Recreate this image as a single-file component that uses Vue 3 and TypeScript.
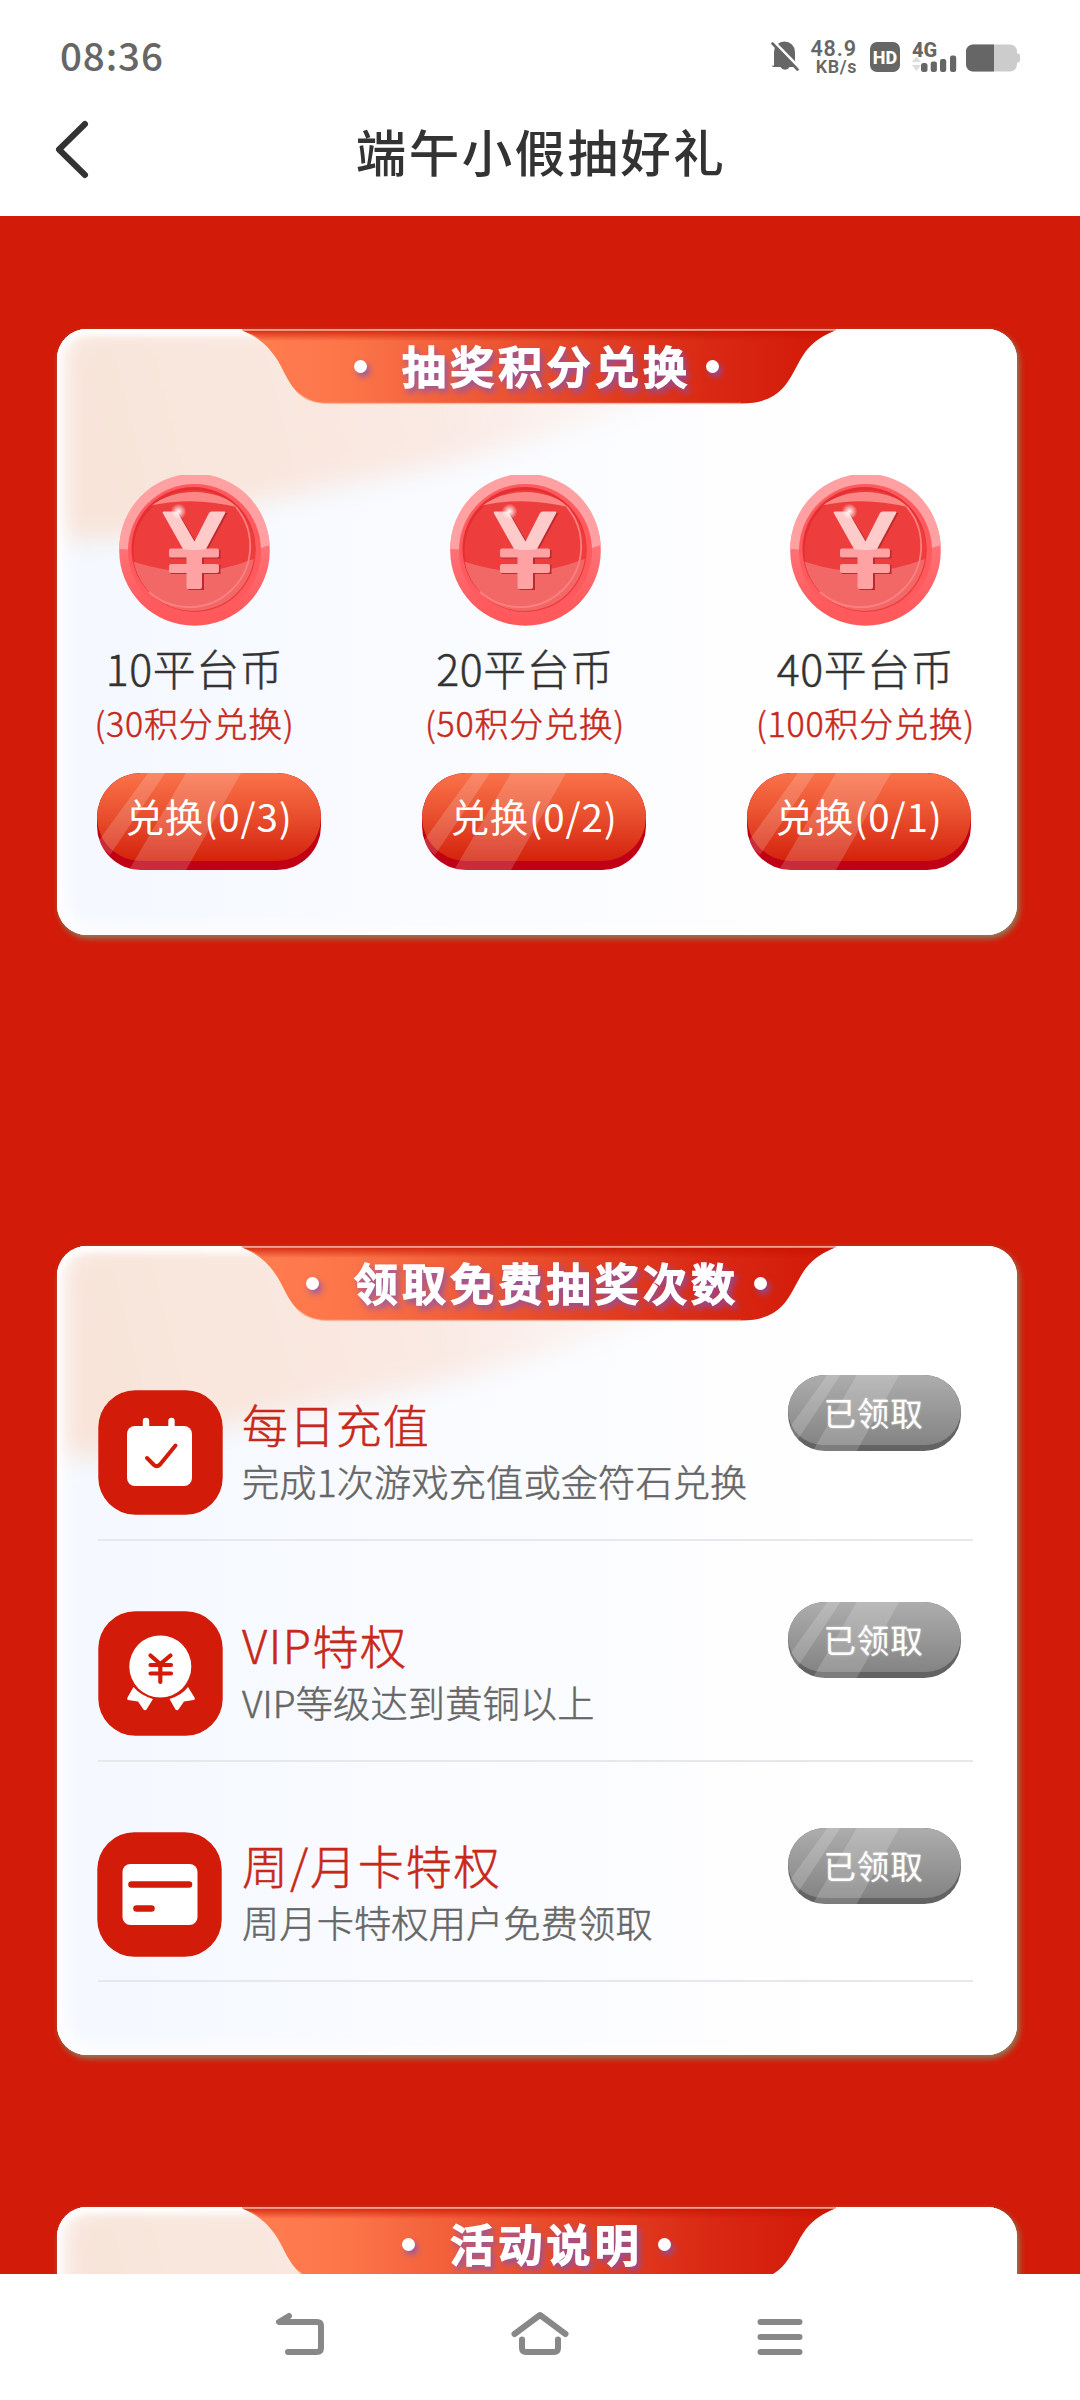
<script setup lang="ts">
interface Exchange {
  coins: number
  points: number
  used: string
}

interface Task {
  icon: 'calendar' | 'medal' | 'card'
  title: string
  note: string
}

const exchanges: Exchange[] = [
  { coins: 10, points: 30, used: '0/3' },
  { coins: 20, points: 50, used: '0/2' },
  { coins: 40, points: 100, used: '0/1' },
]

const tasks: Task[] = [
  { icon: 'calendar', title: '每日充值', note: '完成1次游戏充值或金符石兑换' },
  { icon: 'medal', title: 'VIP特权', note: 'VIP等级达到黄铜以上' },
  { icon: 'card', title: '周/月卡特权', note: '周月卡特权用户免费领取' },
]

const panels = [
  { key: 'exchange', title: '抽奖积分兑换' },
  { key: 'tasks', title: '领取免费抽奖次数' },
  { key: 'rules', title: '活动说明' },
]
</script>

<template>
  <div class="screen">
    <svg class="defs" width="0" height="0" aria-hidden="true">
      <defs>
        <linearGradient id="paper" x1="0" y1="0" x2="1" y2="0">
          <stop offset="0" stop-color="#f4f8ff" />
          <stop offset="0.55" stop-color="#fbfcff" />
          <stop offset="0.85" stop-color="#ffffff" />
        </linearGradient>
        <linearGradient id="peach" gradientUnits="userSpaceOnUse" x1="60" y1="200" x2="620" y2="60">
          <stop offset="0" stop-color="#f8e4d9" />
          <stop offset="0.6" stop-color="#faeae4" />
          <stop offset="1" stop-color="#fdf3ef" stop-opacity="0.5" />
        </linearGradient>
        <linearGradient id="ribbon" gradientUnits="userSpaceOnUse" x1="200" y1="30" x2="770" y2="30">
          <stop offset="0" stop-color="#ff7d50" />
          <stop offset="0.16" stop-color="#fc7549" />
          <stop offset="0.55" stop-color="#e64526" />
          <stop offset="0.8" stop-color="#d92813" />
          <stop offset="1" stop-color="#d21a08" />
        </linearGradient>
        <linearGradient id="ribbonShade" gradientUnits="userSpaceOnUse" x1="0" y1="2" x2="0" y2="12">
          <stop offset="0" stop-color="#c81200" stop-opacity="0.7" />
          <stop offset="1" stop-color="#c81200" stop-opacity="0" />
        </linearGradient>
        <filter id="soft" x="-20%" y="-20%" width="140%" height="140%">
          <feGaussianBlur stdDeviation="13" />
        </filter>
        <linearGradient id="rimLow" x1="0" y1="0" x2="0" y2="1">
          <stop offset="0.45" stop-color="#ff7377" />
          <stop offset="0.9" stop-color="#ff595c" />
        </linearGradient>
        <radialGradient id="spark">
          <stop offset="0" stop-color="#fff" />
          <stop offset="0.3" stop-color="#fff" stop-opacity="0.7" />
          <stop offset="1" stop-color="#fff" stop-opacity="0" />
        </radialGradient>
        <clipPath id="coinFace"><circle cx="74.5" cy="75" r="61" /></clipPath>
      </defs>
    </svg>

    <header class="top">
      <div class="status">
        <span class="clock">08:36</span>
        <div class="indicators">
          <svg class="bell" width="28" height="32" viewBox="0 0 28 32">
            <path d="M3 25V11A10.500 10.500 0 0 1 24 11V20L26.500 26H18.500A5 5 0 0 1 9.500 26H1.500V24Z" fill="#666" />
            <path d="M2.500 0.500L29 27.500" stroke="#fff" stroke-width="3" />
            <path d="M1.500 2.500L26.500 28.500" stroke="#666" stroke-width="2.600" stroke-linecap="round" />
          </svg>
          <div class="speed"><span>48.9</span><span class="unit">KB/s</span></div>
          <span class="hd">HD</span>
          <div class="cell">
            <span class="net">4G</span>
            <svg width="46" height="18" viewBox="0 0 46 18">
              <path d="M0 7L4.500 1.500L9 7ZM0 10H9L4.500 16Z" fill="#ddd" />
              <g fill="#666">
                <rect x="9" y="8" width="6.500" height="9" rx="2.500" />
                <rect x="18.700" y="6.500" width="6.200" height="10.500" rx="2.200" />
                <rect x="28" y="4" width="6.200" height="13" rx="2.200" />
                <rect x="38" y="0.500" width="6.200" height="16.500" rx="2.200" />
              </g>
            </svg>
          </div>
          <svg class="battery" width="54" height="28" viewBox="0 0 54 28">
            <rect x="0" y="0.500" width="51" height="27" rx="7" fill="#ccc" />
            <rect x="49" y="9.500" width="5" height="9" rx="2" fill="#ccc" />
            <path d="M28 0.500H7A7 7 0 0 0 0 7.500V20.500A7 7 0 0 0 7 27.500H28Z" fill="#666" />
          </svg>
        </div>
      </div>
      <div class="navbar">
        <svg class="back" width="40" height="64" viewBox="0 0 40 64">
          <path d="M32 6L6 31.500L32 57" fill="none" stroke="#333" stroke-width="6" stroke-linecap="round" stroke-linejoin="round" />
        </svg>
        <h1>端午小假抽好礼</h1>
      </div>
    </header>

    <main class="page">
      <section v-for="panel in panels" :key="panel.key" class="panel" :class="panel.key">
        <div class="backdrop">
          <svg width="960" height="809" viewBox="0 0 960 809">
            <rect width="960" height="809" fill="url(#paper)" />
            <path d="M-40 -40H660V44C560 90 470 112 400 132C300 156 160 176 90 204Q40 216 -40 204Z" fill="url(#peach)" filter="url(#soft)" />
          </svg>
          <i class="glow"></i>
          <svg width="960" height="80" viewBox="0 0 960 80">
            <path d="M185 1.500C203 9 213 19 221 32C229 46 232 55 241 64C250 72 259 74.500 274 74.500H684C704 74.500 716 69 725 60C735 50 740 34 749 22C757 12 767 6 778 1.500Z" fill="url(#ribbon)" />
            <path d="M185 1.500C198 6 205 10 208 14H756C762 9 770 5 778 1.500Z" fill="url(#ribbonShade)" />
            <path d="M241 64C250 72 259 74.500 274 74.500H684" fill="none" stroke="#ffb89f" stroke-width="1.300" opacity="0.8" />
            <path d="M185 0.800H779" stroke="#f3a091" stroke-width="1.600" />
          </svg>
        </div>

        <h2 class="ribbon-title">
          <i></i><span>{{ panel.title }}</span><i></i>
        </h2>

        <template v-if="panel.key === 'exchange'">
          <div class="rewards">
            <div v-for="item in exchanges" :key="item.coins" class="reward">
              <svg class="coin" width="151" height="151" viewBox="0 0 151 151">
                <circle cx="75.500" cy="75.500" r="75.300" fill="url(#rimLow)" />
                <path d="M0.200 74A75.300 75.300 0 0 1 150.700 70L142 73L9 74.500Z" fill="#ffa1a2" />
                <circle cx="75.500" cy="75.500" r="66.500" fill="#ff5a5e" />
                <circle cx="74.500" cy="74" r="62" fill="#e52f33" />
                <circle cx="75.500" cy="76" r="61" fill="#ed3d3c" />
                <g clip-path="url(#coinFace)">
                  <path d="M30 32Q50 17 75.500 17Q101 17 122 33Q76 21 34 30Z" fill="#fb8787" />
                  <path d="M12 86Q45 97 75 97Q106 96 140 82V140H12Z" fill="#f16866" />
                </g>
                <path d="M117 32A61 61 0 0 1 30 117" fill="none" stroke="#ff8083" stroke-width="1.800" />
                <path transform="translate(1.500 1)" d="M44 37H58L75.500 66L92 37H107L87 74H100V82.500H83.500V89H100V98H83.500V114H68V98H50V89H68V82.500H50V74H64Z" fill="#b92b30" />
                <path d="M52 73.500H98Q100 73.500 100 75.500V80.500Q100 82.500 98 82.500H83V89H98Q100 89 100 91V96Q100 98 98 98H83V112Q83 114 81 114H69.500Q67.500 114 67.500 112V98H52Q50 98 50 96V91Q50 89 52 89H67.500V82.500H52Q50 82.500 50 80.500V75.500Q50 73.500 52 73.500Z" fill="#ffa2a3" />
                <path d="M45 36.500H56.500Q58 36.500 59 38L75.500 66.500L90 38Q91 36.500 92.500 36.500H105.500Q107 36.500 106 38.500L87 74Q75 76 64 74L44 38.500Q43 36.500 45 36.500Z" fill="#ffcaca" />
                <circle cx="59.500" cy="36.500" r="8" fill="url(#spark)" />
              </svg>
              <p class="name">{{ item.coins }}平台币</p>
              <p class="cost">({{ item.points }}积分兑换)</p>
            </div>
          </div>
          <div class="actions">
            <button v-for="item in exchanges" :key="item.used" class="pill" type="button">
              <svg viewBox="0 0 224 97" preserveAspectRatio="none">
                <path d="M51 0H68L13 82L0 70ZM89 0H144L89 97H32Z" fill="#fff" fill-opacity="0.17" />
              </svg>
              <span>兑换({{ item.used }})</span>
            </button>
          </div>
        </template>

        <ul v-else-if="panel.key === 'tasks'" class="list">
          <li v-for="task in tasks" :key="task.icon" :class="task.icon">
            <svg class="icon" width="125" height="125" viewBox="0 0 125 125">
              <rect x="0.300" y="0.300" width="124.400" height="124.400" rx="37" fill="#d21b09" />
              <template v-if="task.icon === 'calendar'">
                <rect x="29" y="36" width="65" height="60" rx="8" fill="#fff" />
                <path d="M48 31V40M73.500 31V40" stroke="#fff" stroke-width="6.400" stroke-linecap="round" />
                <path d="M49 68L56 75Q59 77.500 62 74.500L77.500 55.500" fill="none" stroke="#d21b09" stroke-width="4" stroke-linecap="round" stroke-linejoin="round" />
              </template>
              <template v-else-if="task.icon === 'medal'">
                <circle cx="62.300" cy="55.500" r="31" fill="#fff" />
                <path d="M35.500 76Q42 84 55 88L48.500 98.500Q47 100 45.500 98.500L40 90.500L30 89Q28.500 88.500 29.500 86.500ZM90 76Q84 84 71.500 88L77.500 98.500Q79 100 80.500 98.500L86 90.500L95.500 89Q97.500 88.500 96.500 86.500Z" fill="#fff" />
                <path d="M52.500 44.500L62.300 53L72.500 44.500M52.500 54H73M52.500 62.500H73M62.300 53V71" fill="none" stroke="#d21b09" stroke-width="4.200" stroke-linecap="round" stroke-linejoin="round" />
              </template>
              <template v-else>
                <rect x="25.500" y="32" width="75" height="61" rx="8" fill="#fff" />
                <path d="M34.500 52.500H92M39.500 76.500H54.500" stroke="#d21b09" stroke-width="6.600" stroke-linecap="round" />
              </template>
            </svg>
            <div class="copy">
              <h3>{{ task.title }}</h3>
              <p>{{ task.note }}</p>
            </div>
            <button class="pill done" type="button" disabled>
              <svg viewBox="0 0 224 97" preserveAspectRatio="none">
                <path d="M51 0H68L13 82L0 70ZM89 0H144L89 97H32Z" fill="#fff" fill-opacity="0.17" />
              </svg>
              <span>已领取</span>
            </button>
          </li>
        </ul>
      </section>
    </main>

    <nav class="system">
      <svg width="52" height="50" viewBox="0 0 52 50">
        <path d="M15 8L5 14H43Q47 14 47 18V40Q47 44 43 44H14" />
      </svg>
      <svg width="58" height="50" viewBox="0 0 58 50">
        <path d="M3.500 26L29 7L54.500 26M11 31.500V40Q11 44 15 44H43Q47 44 47 40V31.500" />
      </svg>
      <svg width="52" height="50" viewBox="0 0 52 50">
        <path d="M6.500 14H45.500M6.500 29H45.500M6.500 44H45.500" />
      </svg>
    </nav>
  </div>
</template>

<style>
body {
  background: #fff;
}
</style>

<style scoped>
.screen {
  display: flex;
  flex-direction: column;
  width: 1080px;
  height: 2400px;
  overflow: hidden;
  background: #fff;
  color: #333;
  font-family: "Noto Sans CJK SC", "Noto Sans", sans-serif;
}

.defs {
  position: absolute;
}

h1,
h2,
h3,
p,
ul {
  margin: 0;
  padding: 0;
  font-weight: 400;
  white-space: nowrap;
}

.top {
  flex: none;
  height: 216px;
}

.status {
  display: flex;
  justify-content: space-between;
  box-sizing: border-box;
  height: 96px;
  padding: 37px 60px 0;
  color: #666;
}

.clock {
  margin-top: -3px;
  font-size: 38.5px;
  font-weight: 500;
  line-height: 40px;
  letter-spacing: 0.9px;
}

.indicators {
  display: flex;
  align-items: flex-start;
}

.bell {
  margin-top: 4px;
  margin-right: 12px;
}

.speed {
  display: flex;
  flex-direction: column;
  align-items: flex-end;
  width: 46px;
  margin-top: 3px;
  margin-right: 13px;
  font: 600 21.5px/18px "Roboto", sans-serif;
  letter-spacing: 0.9px;
}

.speed .unit {
  font-size: 18px;
  line-height: 18px;
  letter-spacing: 0.6px;
}

.hd {
  width: 30px;
  height: 30px;
  margin-top: 5px;
  margin-right: 12px;
  border-radius: 7px;
  background: #666;
  color: #fff;
  font: 800 18px/31px "Roboto", sans-serif;
  text-align: center;
}

.cell {
  display: flex;
  flex-direction: column;
  margin-top: 5px;
  margin-right: 8px;
}

.cell .net {
  height: 13px;
  font: 800 20px/17px "Roboto", sans-serif;
}

.battery {
  margin-top: 7px;
}

.navbar {
  display: grid;
  grid-template-columns: 120px 1fr 120px;
  height: 120px;
}

.back {
  margin: 22px 0 0 53px;
}

h1 {
  color: #333;
  font-size: 50.5px;
  font-weight: 500;
  line-height: 60px;
  letter-spacing: 2.4px;
  text-align: center;
  margin: 24px -2px 0 0;
}

.page {
  flex: none;
  box-sizing: border-box;
  height: 2058px;
  padding: 113px 63px 0 57px;
  overflow: hidden;
  background: #d21b09;
}

.panel {
  position: relative;
  border-radius: 30px;
  box-shadow: 2px 3px 6px 0 rgba(125, 150, 110, 0.9);
}

.exchange {
  height: 606px;
}

.tasks {
  height: 809px;
  margin-top: 311px;
}

.rules {
  height: 400px;
  margin-top: 152px;
}

.backdrop {
  position: absolute;
  inset: 0;
  overflow: hidden;
  border-radius: 30px;
  background: #fff;
}

.backdrop svg {
  position: absolute;
  top: 0;
  left: 0;
}

.glow {
  position: absolute;
  inset: 0;
  border-radius: 30px;
  box-shadow: inset 9px 0 24px 0 rgba(255, 255, 255, 0.75), inset 0 4px 7px 2px #fff,
    inset 0 -8px 20px 0 rgba(255, 255, 255, 0.8);
}

.ribbon-title {
  position: relative;
  display: flex;
  align-items: center;
  justify-content: center;
  height: 75px;
  margin-left: -1px;
  color: #fff;
  filter: drop-shadow(3px 4px 3px rgba(125, 85, 190, 0.8));
}

.ribbon-title i {
  width: 13px;
  height: 13px;
  border-radius: 50%;
  background: #fff;
}

.ribbon-title span {
  margin: -4px 15px 0 35px;
  font-size: 44px;
  font-weight: 500;
  line-height: 60px;
  letter-spacing: 4.2px;
  -webkit-text-stroke: 1.8px #fff;
  stroke-linejoin: round;
}

.rewards {
  position: relative;
  display: grid;
  grid-template-columns: 275px 386px 295px;
  margin-top: 71px;
}

.reward {
  display: flex;
  flex-direction: column;
  align-items: center;
}

.name {
  margin-top: 13px;
  color: #333;
  font-size: 42.8px;
  font-weight: 300;
  line-height: 56px;
  letter-spacing: 0.7px;
  -webkit-text-stroke: 0.5px #333;
}

.cost {
  margin-top: 6px;
  color: #c8281a;
  font-size: 34px;
  font-weight: 300;
  line-height: 44px;
  letter-spacing: 0.8px;
  -webkit-text-stroke: 0.5px #c8281a;
}

.actions {
  position: relative;
  display: flex;
  gap: 101px;
  margin: 28px 0 0 40px;
}

.pill {
  position: relative;
  flex: none;
  width: 224px;
  height: 97px;
  padding: 0;
  overflow: hidden;
  border: 0;
  border-radius: 44px;
  background: #c00014;
  color: #fff;
  font-family: inherit;
  font-size: 38.5px;
  letter-spacing: 0.9px;
}

.pill::before {
  content: "";
  position: absolute;
  inset: 0 0 9px;
  border-radius: 44px;
  background: linear-gradient(#fa7249, #ea5230 45%, #d4220d);
}

.pill svg {
  position: absolute;
  inset: 0;
  width: 100%;
  height: 100%;
}

.pill span {
  position: relative;
  display: block;
  height: 97px;
  line-height: 84px;
}

.list {
  position: relative;
  padding: 69px 44px 0 41px;
  list-style: none;
}

.list li {
  display: flex;
  align-items: flex-start;
  box-sizing: border-box;
  height: 220.5px;
  width: 875px;
}

.list li::after {
  content: "";
  position: absolute;
  width: 875px;
  height: 2px;
  margin-top: 149px;
  background: #e6e8eb;
}

.list .card .icon {
  margin: 1px 1px 0 -1px;
}

.copy {
  flex: 1;
  margin-left: 19px;
}

h3 {
  margin-top: 3px;
  color: #c8281a;
  font-size: 46px;
  font-weight: 300;
  line-height: 60px;
  letter-spacing: 0.9px;
  -webkit-text-stroke: 0.5px #c8281a;
}

.medal h3 {
  letter-spacing: 1.5px;
}

.card h3 {
  letter-spacing: 1.9px;
}

.copy p {
  margin-top: 3px;
  color: #666;
  font-size: 37.2px;
  font-weight: 300;
  line-height: 50px;
  letter-spacing: 0.15px;
  -webkit-text-stroke: 0.5px #666;
}

.pill.done {
  width: 173px;
  height: 76px;
  margin: -15px 12px 0 0;
  border-radius: 37px;
  background: #636363;
  font-size: 32.5px;
}

.medal .pill.done {
  margin-top: -9px;
}

.card .pill.done {
  margin-top: -3px;
}

.pill.done::before {
  inset: 0 0 6px;
  border-radius: 36px;
  background: linear-gradient(#adadad, #848484);
}

.pill.done span {
  height: 76px;
  margin-left: -2px;
  line-height: 73px;
  text-shadow: 0 0 2px rgba(255, 255, 255, 0.6);
}

.system {
  display: flex;
  flex: none;
  justify-content: space-between;
  height: 126px;
  padding: 34px 274px 0;
}

.system path {
  fill: none;
  stroke: #888;
  stroke-width: 6;
  stroke-linecap: round;
  stroke-linejoin: round;
}
</style>
